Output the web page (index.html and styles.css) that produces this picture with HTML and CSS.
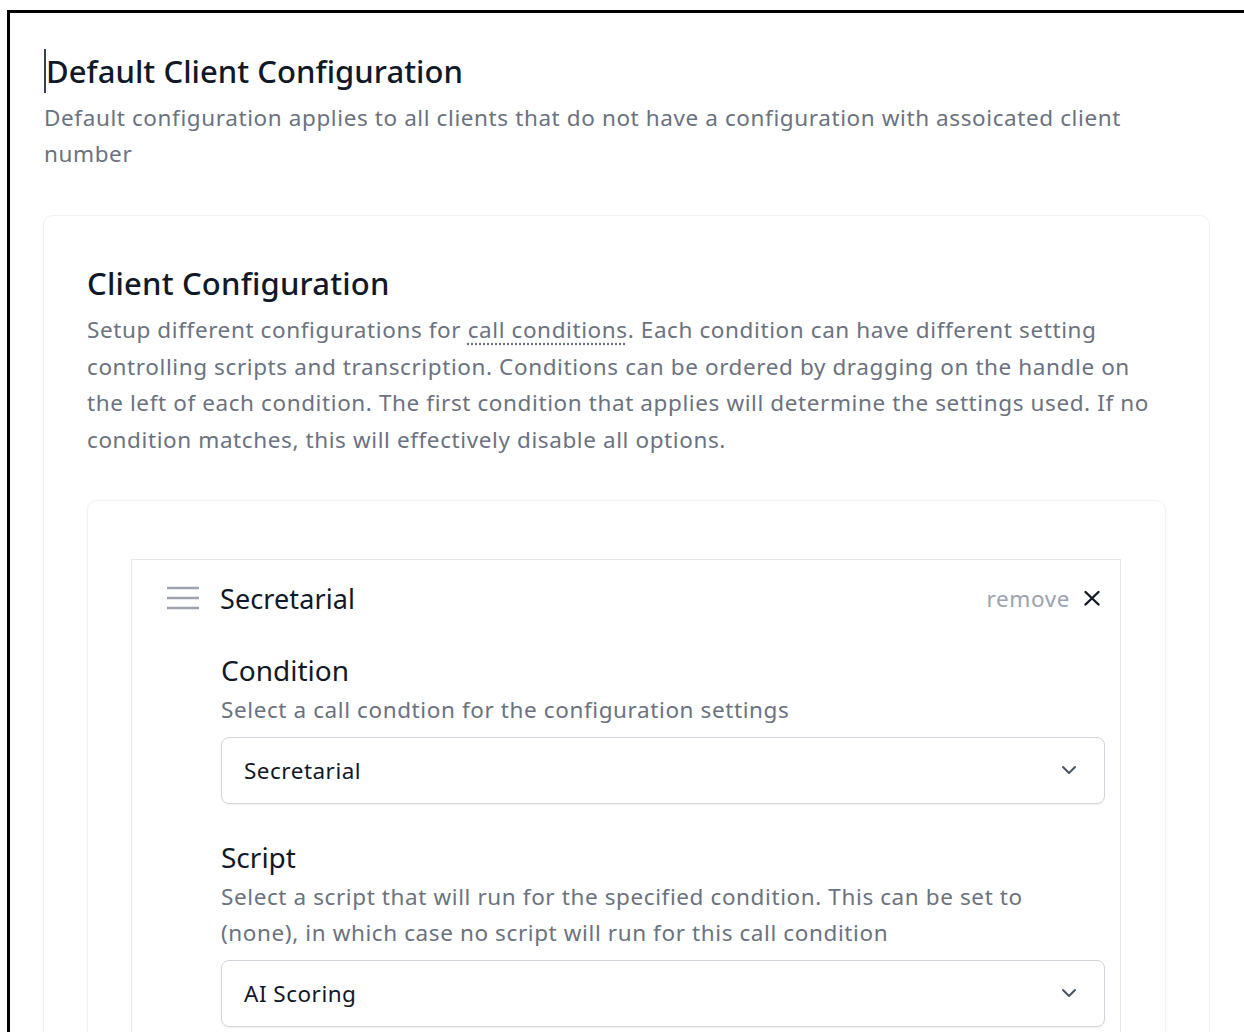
FILE: index.html
```html
<!DOCTYPE html>
<html lang="en">
<head>
<meta charset="utf-8">
<title>Default Client Configuration</title>
<link rel="stylesheet" href="styles.css">
</head>
<body>
<div class="frame">
  <header class="page-head">
    <h1 class="page-title"><span class="caret"></span>Default Client Configuration</h1>
    <p class="page-desc">Default configuration applies to all clients that do not have a configuration with assoicated client number</p>
  </header>

  <section class="card">
    <h2 class="card-title">Client Configuration</h2>
    <p class="card-desc">Setup different configurations for <span class="hint" title="Call conditions">call conditions</span>. Each condition can have different setting controlling scripts and transcription. Conditions can be ordered by dragging on the handle on the left of each condition. The first condition that applies will determine the settings used. If no condition matches, this will effectively disable all options.</p>

    <div class="panel">
      <div class="condition">
        <div class="cond-head">
          <span class="handle">
            <svg width="34" height="24" viewBox="0 0 34 24" aria-hidden="true">
              <path d="M1 2h32M1 12h32M1 22h32" stroke="#9ca3af" stroke-width="2.4" fill="none"/>
            </svg>
          </span>
          <span class="cond-name">Secretarial</span>
          <button class="remove" type="button">remove
            <svg width="18" height="18" viewBox="0 0 18 18" aria-hidden="true">
              <path d="M2.5 3l13 12.5M15.5 3L2.5 15.5" stroke="#111827" stroke-width="2.4" fill="none" stroke-linecap="round"/>
            </svg>
          </button>
        </div>

        <div class="field">
          <h3 class="field-label">Condition</h3>
          <p class="field-help">Select a call condtion for the configuration settings</p>
          <div class="select">
            <span>Secretarial</span>
            <svg width="20" height="20" viewBox="0 0 20 20" aria-hidden="true">
              <path d="M4 7l6 6 6-6" stroke="#4b5563" stroke-width="2" fill="none" stroke-linecap="round" stroke-linejoin="round"/>
            </svg>
          </div>
        </div>

        <div class="field">
          <h3 class="field-label">Script</h3>
          <p class="field-help">Select a script that will run for the specified condition. This can be set to (none), in which case no script will run for this call condition</p>
          <div class="select">
            <span>AI Scoring</span>
            <svg width="20" height="20" viewBox="0 0 20 20" aria-hidden="true">
              <path d="M4 7l6 6 6-6" stroke="#4b5563" stroke-width="2" fill="none" stroke-linecap="round" stroke-linejoin="round"/>
            </svg>
          </div>
        </div>
      </div>
    </div>
  </section>
</div>
</body>
</html>
```

FILE: styles.css
```css
html, body {
  margin: 0;
  padding: 0;
  background: #fff;
}

body {
  font-family: "Noto Sans", "Open Sans", sans-serif;
  color: #1f2937;
  overflow: hidden;
}

.frame {
  margin: 10px 0 0 7px;
  border-top: 3px solid #000;
  border-left: 3px solid #000;
  padding: 34px 34px 0 33px;
  min-height: 1100px;
}

.page-head {
  padding-left: 1px;
}

.page-title {
  position: relative;
  margin: 0;
  font-size: 31px;
  font-weight: 500;
  line-height: 48px;
  letter-spacing: 0.05px;
  color: #111827;
  padding-left: 2px;
}

.caret {
  position: absolute;
  left: 0;
  top: 2px;
  width: 2px;
  height: 44px;
  background: #374151;
}

.page-desc {
  margin: 5px 0 0;
  font-size: 22.5px;
  line-height: 36px;
  letter-spacing: 0.6px;
  color: #6b7280;
}

.card {
  margin-top: 43px;
  border: 1px solid #f1f2f4;
  border-radius: 10px;
  box-shadow: 0 1px 3px rgba(0, 0, 0, 0.04);
  padding: 43px 43px 0 43px;
}

.card-title {
  margin: 0;
  font-size: 31px;
  font-weight: 500;
  line-height: 48px;
  letter-spacing: 0.2px;
  color: #111827;
}

.card-desc {
  margin: 5px 0 0;
  font-size: 22.5px;
  line-height: 36.5px;
  letter-spacing: 0.6px;
  color: #6b7280;
}

.hint {
  text-decoration: underline dotted #6b7280;
  text-underline-offset: 5px;
  cursor: help;
}

.panel {
  margin-top: 42px;
  border: 1px solid #f1f2f4;
  border-radius: 10px;
  box-shadow: 0 1px 3px rgba(0, 0, 0, 0.04);
  padding: 58px 44px 40px 43px;
}

.condition {
  border: 1px solid #e5e7eb;
  padding: 0 15px 30px 89px;
}

.cond-head {
  display: flex;
  align-items: center;
  height: 76px;
  margin-left: -55px;
}

.handle {
  display: flex;
  width: 34px;
  margin-right: 20px;
}

.cond-name {
  flex: 1;
  font-size: 27px;
  letter-spacing: 0.1px;
  color: #111827;
}

.remove {
  display: flex;
  align-items: center;
  gap: 13px;
  border: 0;
  background: none;
  padding: 0 4px 0 0;
  font: inherit;
  font-size: 22.5px;
  letter-spacing: 0.6px;
  color: #9ca3af;
  cursor: pointer;
}

.field {
  margin-top: 14px;
}

.field + .field {
  margin-top: 33px;
}

.field-label {
  margin: 0;
  font-size: 28px;
  font-weight: 400;
  line-height: 40px;
  color: #111827;
}

.field-help {
  margin: 2px 0 0;
  font-size: 22.5px;
  line-height: 36.5px;
  letter-spacing: 0.6px;
  color: #6b7280;
}

.select {
  display: flex;
  align-items: center;
  justify-content: space-between;
  box-sizing: border-box;
  height: 67px;
  margin-top: 8px;
  padding: 0 25px 0 22px;
  border: 1px solid #d1d5db;
  border-radius: 8px;
  box-shadow: 0 1px 2px rgba(0, 0, 0, 0.06);
  font-size: 22.5px;
  letter-spacing: 0.5px;
  color: #111827;
}
```
